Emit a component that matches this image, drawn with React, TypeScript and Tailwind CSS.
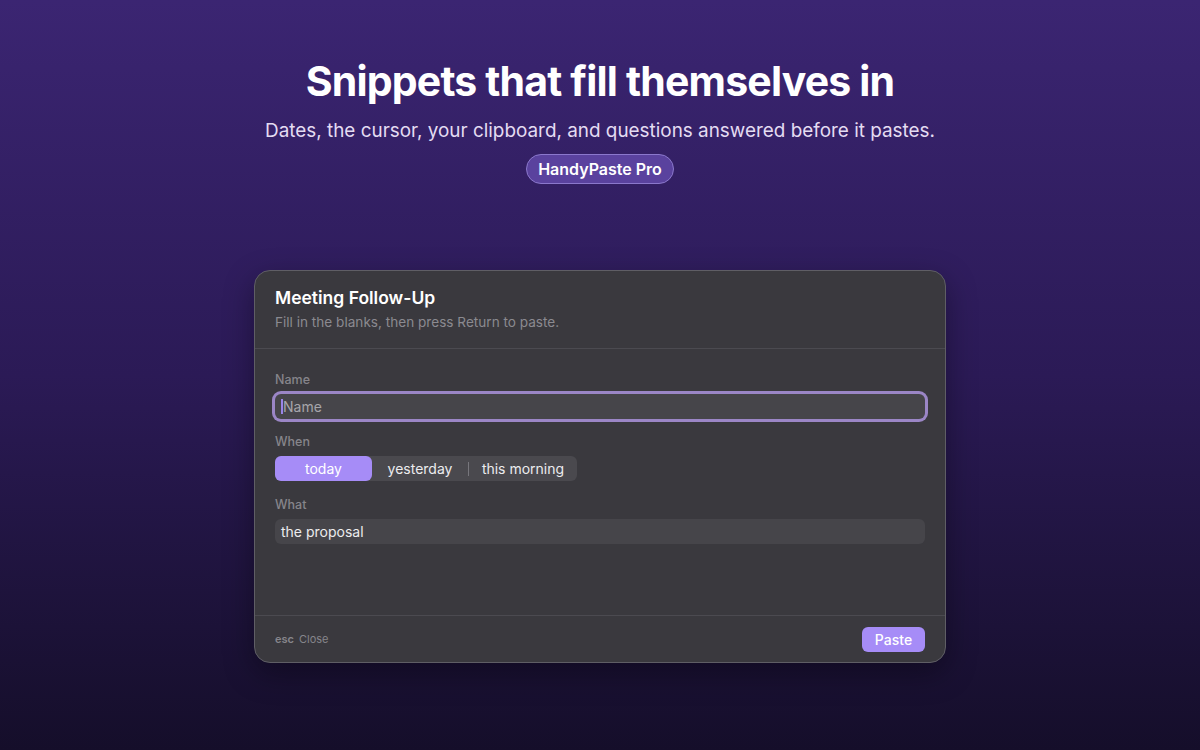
import React from "react";

export default function App() {
  return (
    <div
      className="w-[1200px] h-[750px] flex flex-col items-center bg-gradient-to-b from-[#3b2572] via-[#2b1a56] to-[#150e2a] text-white"
      style={{ fontFamily: "Inter, 'Noto Sans', sans-serif" }}
    >
      <h1 className="mt-[56px] text-[41px] leading-[50px] font-bold tracking-[-0.02em] text-white">
        Snippets that fill themselves in
      </h1>
      <p className="mt-[12px] text-[18.9px] leading-[26px] text-[#e4dcf2]">
        Dates, the cursor, your clipboard, and questions answered before it pastes.
      </p>
      <div className="mt-[10px] h-[30px] px-[11.5px] flex items-center rounded-full bg-[#5a429e] border border-[#8b78cc] text-[16px] font-semibold text-white">
        HandyPaste Pro
      </div>

      <div className="mt-[86px] w-[692px] h-[393px] rounded-[16px] bg-[#3a393e] border border-[#5f5e65] shadow-[0_10px_30px_rgba(0,0,0,0.35)] flex flex-col overflow-hidden">
        <div className="h-[78px] px-[20px] pt-[16px] border-b border-[#4b4a50] shrink-0">
          <div className="text-[17.5px] leading-[22px] font-semibold text-white">Meeting Follow-Up</div>
          <div className="mt-[4px] text-[13.6px] leading-[18px] text-[#8b8a90]">
            Fill in the blanks, then press Return to paste.
          </div>
        </div>

        <div className="flex-1 px-[20px] pt-[23px] flex flex-col">
          <div className="text-[12.5px] leading-[16px] font-medium text-[#86858b]">Name</div>
          <div className="mt-[6px] h-[25px] rounded-[6px] bg-[#46454a] ring-[3px] ring-[#9b86c6] flex items-center px-[6px]">
            <span className="w-[2px] h-[15px] bg-[#9a84e8]" />
            <span className="text-[14px] text-[#a6a5ab]">Name</span>
          </div>

          <div className="mt-[15px] text-[12.5px] leading-[16px] font-medium text-[#86858b]">When</div>
          <div className="mt-[6px] h-[25px] w-[302px] rounded-[6px] bg-[#4a494e] flex items-center text-[14px]">
            <div className="w-[97px] h-full rounded-[6px] bg-[#a68cf7] flex items-center justify-center text-white">
              today
            </div>
            <div className="w-[96px] h-full flex items-center justify-center text-[#ececee]">yesterday</div>
            <div className="w-px h-[14px] bg-[#77767c]" />
            <div className="flex-1 h-full flex items-center justify-center text-[#ececee]">this morning</div>
          </div>

          <div className="mt-[16px] text-[12.5px] leading-[16px] font-medium text-[#86858b]">What</div>
          <div className="mt-[6px] h-[25px] rounded-[6px] bg-[#46454a] flex items-center px-[6px] text-[14px] text-[#ececee]">
            the proposal
          </div>
        </div>

        <div className="h-[47px] shrink-0 border-t border-[#4b4a50] px-[20px] flex items-center justify-between">
          <div className="flex items-center gap-[5px] text-[11px] text-[#86858b]">
            <span className="font-semibold">esc</span>
            <span>Close</span>
          </div>
          <div className="h-[25px] w-[63px] rounded-[6px] bg-[#a68cf7] flex items-center justify-center text-[14px] font-medium text-white">
            Paste
          </div>
        </div>
      </div>
    </div>
  );
}
